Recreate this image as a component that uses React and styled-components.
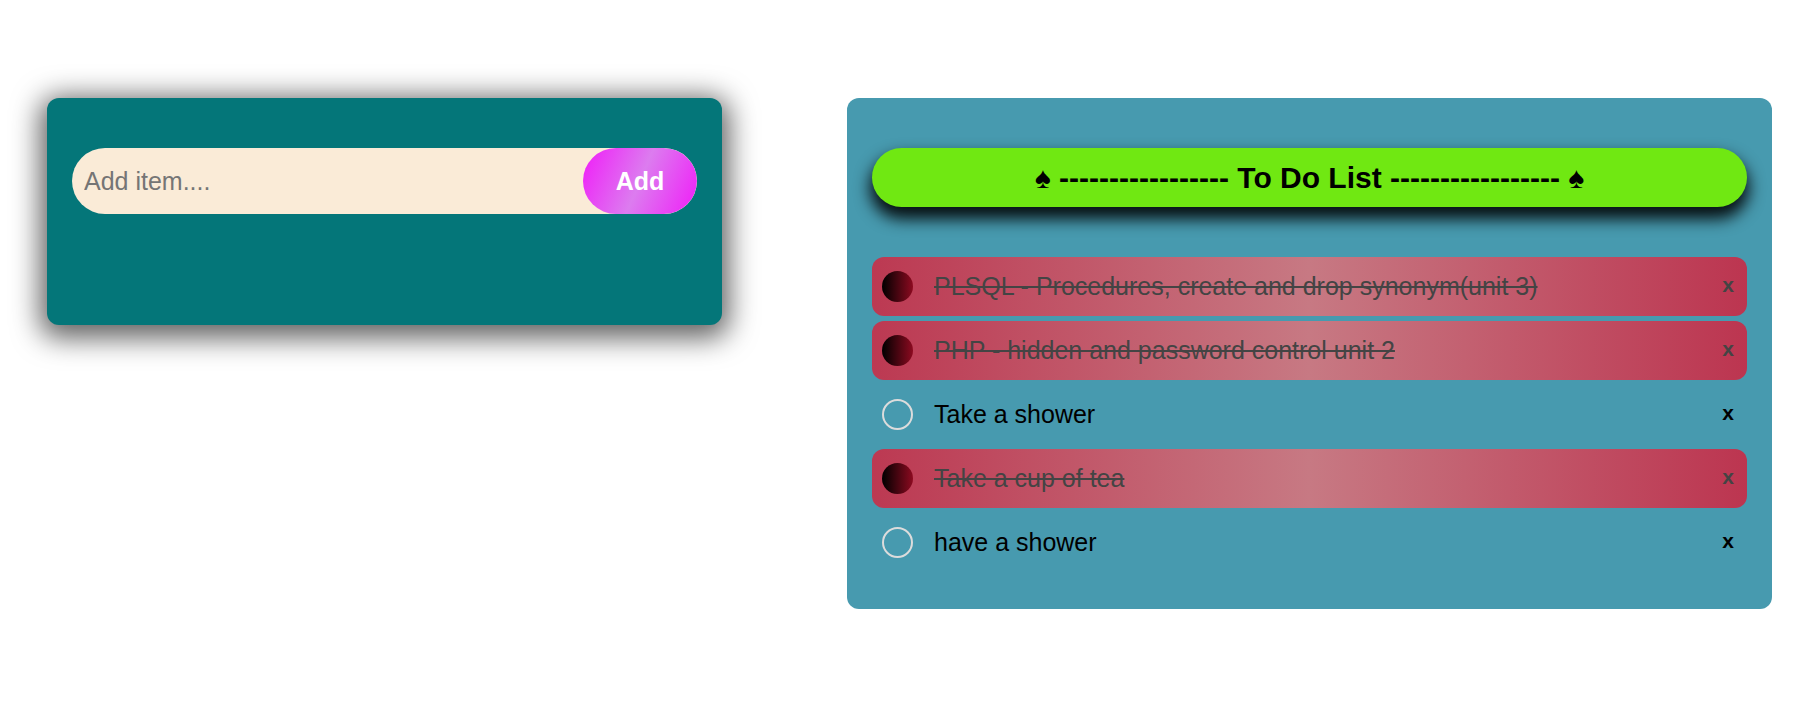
import React from "react";
import styled, { createGlobalStyle } from "styled-components";

const Global = createGlobalStyle`
  html, body { margin: 0; padding: 0; background: #ffffff; }
  body { font-family: "Liberation Sans", Arial, sans-serif; }
`;

const Page = styled.div`
  display: flex;
  justify-content: center;
  align-items: flex-start;
  gap: 125px;
  padding-top: 98px;
`;

const InputCard = styled.div`
  box-sizing: border-box;
  width: 675px;
  height: 227px;
  padding: 50px 25px;
  background: #047679;
  border-radius: 12px;
  box-shadow: 0 6px 28px 7px rgba(0, 0, 0, 0.62);
`;

const Form = styled.form`
  display: flex;
  height: 66px;
  background: #faebd7;
  border-radius: 33px;
  overflow: hidden;
`;

const TextInput = styled.input`
  flex: 1;
  min-width: 0;
  border: none;
  outline: none;
  background: transparent;
  padding: 0 0 0 12px;
  font-family: "Liberation Sans", Arial, sans-serif;
  font-size: 25px;
  color: #222;
  &::placeholder { color: #757575; }
`;

const AddButton = styled.button`
  width: 114px;
  height: 66px;
  border: none;
  border-radius: 33px;
  background: linear-gradient(113deg, #f01cf8 0%, #dc7cef 50%, #f01cf8 100%);
  color: #ffffff;
  font-family: "Liberation Sans", Arial, sans-serif;
  font-weight: bold;
  font-size: 25px;
  cursor: pointer;
`;

const ListCard = styled.div`
  box-sizing: border-box;
  width: 925px;
  padding: 50px 25px 37px;
  background: #479aaf;
  border-radius: 12px;
`;

const Title = styled.h1`
  margin: 0 0 50px;
  height: 59px;
  display: flex;
  align-items: center;
  justify-content: center;
  background: #70e812;
  border-radius: 30px;
  box-shadow: 0 10px 16px 2px rgba(0, 0, 0, 0.9);
  font-family: "Liberation Sans", Arial, sans-serif;
  font-weight: bold;
  font-size: 30px;
  color: #000;
  white-space: pre;
`;

const List = styled.ul`
  list-style: none;
  margin: 0;
  padding: 0;
  display: flex;
  flex-direction: column;
  gap: 5px;
`;

const Item = styled.li`
  height: 59px;
  display: flex;
  align-items: center;
  padding: 0 13px 0 10px;
  border-radius: 12px;
  background: ${(p) =>
    p.$done
      ? "linear-gradient(to right, #bc3952 0%, #c77983 50%, #bc3550 100%)"
      : "transparent"};
`;

const Check = styled.span`
  box-sizing: border-box;
  width: 31px;
  height: 31px;
  border-radius: 50%;
  flex: none;
  border: ${(p) => (p.$done ? "none" : "2px solid #dcdcdc")};
  background: ${(p) =>
    p.$done ? "linear-gradient(to right, #000000, #8c0a20)" : "transparent"};
`;

const Label = styled.span`
  flex: 1;
  margin-left: 21px;
  font-size: 25px;
  color: ${(p) => (p.$done ? "#444444" : "#000000")};
  text-decoration: ${(p) => (p.$done ? "line-through" : "none")};
  text-decoration-thickness: 2px;
`;

const Remove = styled.span`
  font-size: 21px;
  font-weight: bold;
  line-height: 1;
  margin-top: -4px;
  color: ${(p) => (p.$done ? "#444444" : "#000000")};
  cursor: pointer;
`;

const todos = [
  { text: "PLSQL - Procedures, create and drop synonym(unit 3)", done: true },
  { text: "PHP - hidden and password control unit 2", done: true },
  { text: "Take a shower", done: false },
  { text: "Take a cup of tea", done: true },
  { text: "have a shower", done: false },
];

export default function App() {
  return (
    <>
      <Global />
      <Page>
        <InputCard>
          <Form onSubmit={(e) => e.preventDefault()}>
            <TextInput placeholder="Add item...." />
            <AddButton type="submit">Add</AddButton>
          </Form>
        </InputCard>
        <ListCard>
          <Title>{"♠ ----------------- To Do List ----------------- ♠"}</Title>
          <List>
            {todos.map((t, i) => (
              <Item key={i} $done={t.done}>
                <Check $done={t.done} />
                <Label $done={t.done}>{t.text}</Label>
                <Remove $done={t.done}>x</Remove>
              </Item>
            ))}
          </List>
        </ListCard>
      </Page>
    </>
  );
}
